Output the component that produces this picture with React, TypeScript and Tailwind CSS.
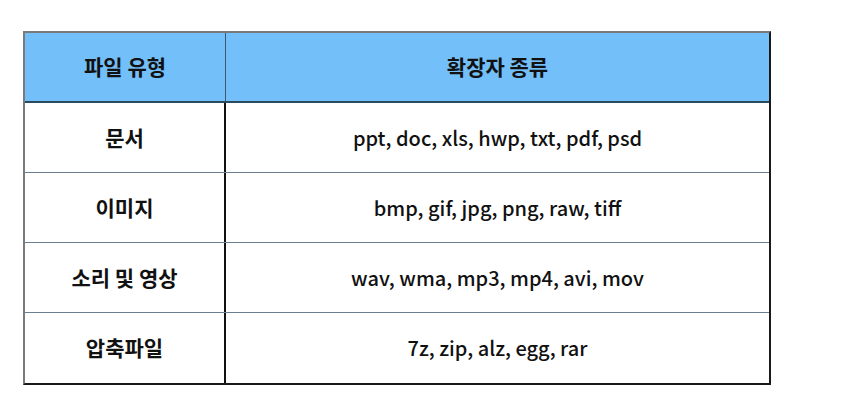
import React from 'react';

const rows = [
  { type: '문서', ext: 'ppt, doc, xls, hwp, txt, pdf, psd' },
  { type: '이미지', ext: 'bmp, gif, jpg, png, raw, tiff' },
  { type: '소리 및 영상', ext: 'wav, wma, mp3, mp4, avi, mov' },
  { type: '압축파일', ext: '7z, zip, alz, egg, rar' },
];

export default function App() {
  return (
    <div
      className="w-[866px] h-[410px] bg-white pt-[31px] pl-[23px]"
      style={{ fontFamily: '"Noto Sans CJK KR", "Noto Sans", sans-serif' }}
    >
      <div className="w-[748px] border-l-2 border-l-[#7a7a7a] border-t-2 border-t-[#7a7a7a] border-r-2 border-r-[#1a1a1a] border-b-2 border-b-[#1a1a1a]">
        <div className="grid grid-cols-[201px_1fr] h-[70px] bg-[#73bffa] border-b-2 border-b-[#2a4a60] text-[21px] font-bold text-[#111]">
          <div className="flex items-center justify-center border-r border-r-[#3b5a70]">파일 유형</div>
          <div className="flex items-center justify-center">확장자 종류</div>
        </div>
        {rows.map((r, i) => (
          <div
            key={r.type}
            className={`grid grid-cols-[201px_1fr] h-[70px] text-[#111] ${
              i < rows.length - 1 ? 'border-b border-b-[#6b7f90]' : ''
            }`}
          >
            <div className="flex items-center justify-center border-r-2 border-r-[#111] font-bold text-[21px]">{r.type}</div>
            <div className="flex items-center justify-center text-[20px] font-medium">{r.ext}</div>
          </div>
        ))}
      </div>
    </div>
  );
}
